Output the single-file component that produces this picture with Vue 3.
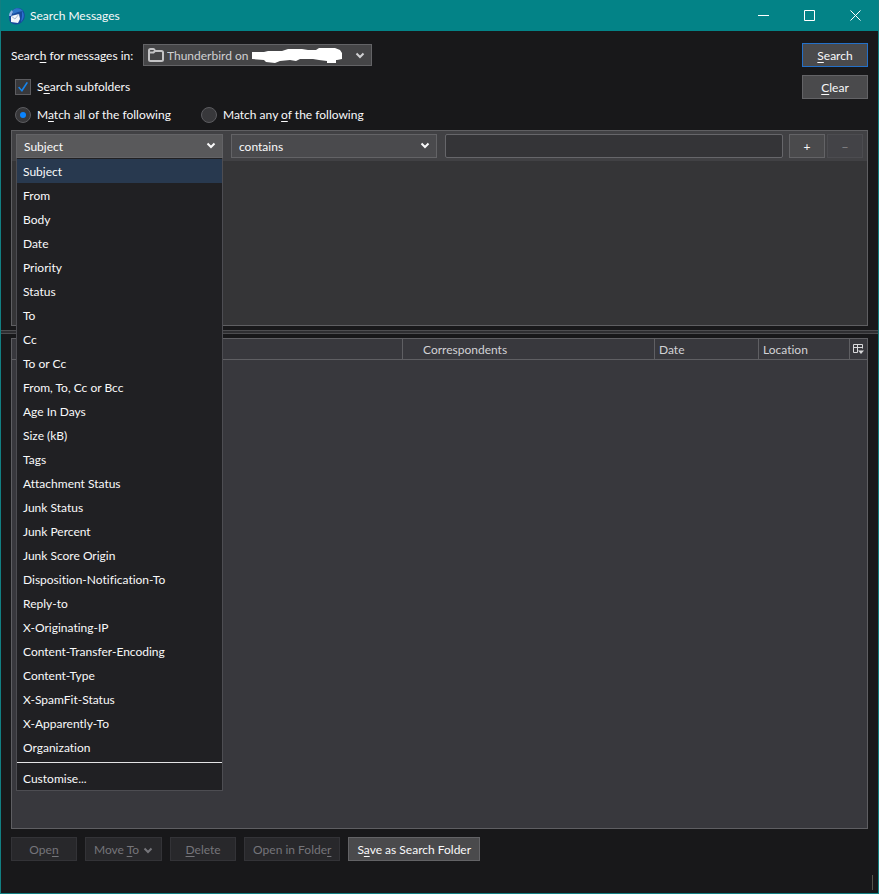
<script setup>
import { ref } from 'vue'

const fields = [
  'Subject', 'From', 'Body', 'Date', 'Priority', 'Status', 'To', 'Cc', 'To or Cc',
  'From, To, Cc or Bcc', 'Age In Days', 'Size (kB)', 'Tags', 'Attachment Status',
  'Junk Status', 'Junk Percent', 'Junk Score Origin', 'Disposition-Notification-To',
  'Reply-to', 'X-Originating-IP', 'Content-Transfer-Encoding', 'Content-Type',
  'X-SpamFit-Status', 'X-Apparently-To', 'Organization'
]
const field = ref('Subject')
const operator = ref('contains')
const term = ref('')
const subfolders = ref(true)
const match = ref('all')
</script>

<template>
  <div class="window">
    <header class="titlebar">
      <svg class="app-icon" viewBox="0 0 18 18" aria-hidden="true">
        <path d="M5 3C8-.2 14 .3 16 5c2 5 0 10-5 12-4 1-8 0-9.500-3L1 9c1-3 2-4 4-6z" fill="#164a9c" />
        <path d="M5 3c3-3 8-2 10 1l-5 1-5 2z" fill="#2f74c8" />
        <path d="M14 4c3 3 2 8-1 11l1-6z" fill="#2b6fd0" />
        <path d="M3 9l8-2 1 5-2 4-7-1z" fill="#f2f5fa" />
        <path d="M3 9l4 3 4-5" fill="none" stroke="#a9b9d2" />
        <path d="M1 9c0-3 1-4 3-6l1 2-2 4z" fill="#8fb3e6" />
      </svg>
      <h1>Search Messages</h1>
      <div class="controls">
        <button type="button" aria-label="Minimise">
          <svg viewBox="0 0 11 11"><path d="M0 5.500h11" /></svg>
        </button>
        <button type="button" aria-label="Maximise">
          <svg viewBox="0 0 11 11"><path d="M.5.5h10v10H.5z" /></svg>
        </button>
        <button type="button" aria-label="Close">
          <svg viewBox="0 0 11 11"><path d="M.5.5l10 10M10.500.5l-10 10" /></svg>
        </button>
      </div>
    </header>

    <section class="scope">
      <div class="options">
        <div class="folder-row">
          <label for="folder">Searc<u>h</u> for messages in:</label>
          <div class="select folder">
            <svg class="folder-icon" viewBox="0 0 16 14" aria-hidden="true">
              <path d="M1 11.500V2.500Q1 1 2.500 1h3Q6.500 1 7 3h6.500Q15 3 15 4.500v7Q15 13 13.500 13h-11Q1 13 1 11.500zM1 4.500h4.500L7 3" />
            </svg>
            <select id="folder"><option>Thunderbird on</option></select>
            <svg class="redaction" viewBox="0 0 92 16" aria-hidden="true">
              <path d="M0 4h12l4-1h14l6-2h14l6 1h8l3-2h16l5 2 2 3v6l-5 1h-1v3h-9v-2l-8-1-6-1H48l-4 2-6-1-10 1-5 2-9-1-2-2-12-1z" />
            </svg>
            <svg class="chevron" viewBox="0 0 10 7" aria-hidden="true"><path d="M1.500 1.500L5 5l3.500-3.500" /></svg>
          </div>
        </div>
        <div class="choice-row">
          <label class="choice"><input v-model="subfolders" type="checkbox"><span>S<u>e</u>arch subfolders</span></label>
        </div>
        <div class="choice-row">
          <label class="choice first"><input v-model="match" type="radio" name="match" value="all"><span>M<u>a</u>tch all of the following</span></label>
          <label class="choice"><input v-model="match" type="radio" name="match" value="any"><span>Match any <u>o</u>f the following</span></label>
        </div>
      </div>
      <div class="actions">
        <button class="btn primary" type="button"><span><u>S</u>earch</span></button>
        <button class="btn" type="button"><span><u>C</u>lear</span></button>
      </div>
    </section>

    <section class="terms">
      <div class="term">
        <div class="select field">
          <select v-model="field" aria-label="Field">
            <option v-for="name in fields" :key="name">{{ name }}</option>
          </select>
          <svg class="chevron" viewBox="0 0 10 7" aria-hidden="true"><path d="M1.500 1.500L5 5l3.500-3.500" /></svg>
          <ul class="menu" role="listbox" aria-label="Fields">
            <li
              v-for="name in fields"
              :key="name"
              role="option"
              :aria-selected="name === field"
              :class="{ selected: name === field }"
              @click="field = name"
            >{{ name }}</li>
            <li class="separator" role="separator"></li>
            <li role="option">Customise...</li>
          </ul>
        </div>
        <div class="select operator">
          <select v-model="operator" aria-label="Operator"><option>contains</option></select>
          <svg class="chevron" viewBox="0 0 10 7" aria-hidden="true"><path d="M1.500 1.500L5 5l3.500-3.500" /></svg>
        </div>
        <input v-model="term" class="value" type="text" aria-label="Value">
        <div class="row-buttons">
          <button class="btn small" type="button">+</button>
          <button class="btn small" type="button" disabled>−</button>
        </div>
      </div>
    </section>

    <div class="splitter" role="separator"></div>

    <section class="results">
      <table>
        <colgroup>
          <col><col class="c-corr"><col class="c-date"><col class="c-loc"><col class="c-pick">
        </colgroup>
        <thead>
          <tr>
            <th></th>
            <th class="corr">Correspondents</th>
            <th>Date</th>
            <th>Location</th>
            <th class="pick">
              <button type="button" aria-label="Select columns to display">
                <svg viewBox="0 0 11 11">
                  <path d="M4.500 8.500h-4v-8h9v4M.5 3.500h9M4.500.5v8" fill="none" stroke="#d8d8da" />
                  <path d="M5 6.500h6l-3 3.500z" fill="#d8d8da" />
                </svg>
              </button>
            </th>
          </tr>
        </thead>
      </table>
    </section>

    <footer class="commands">
      <button class="btn" type="button" disabled><span>Ope<u>n</u></span></button>
      <button class="btn" type="button" disabled>
        <span>Move <u>T</u>o</span>
        <svg class="arrow" viewBox="0 0 10 7" aria-hidden="true"><path d="M1.500 1.500L5 5l3.500-3.500" /></svg>
      </button>
      <button class="btn" type="button" disabled><span><u>D</u>elete</span></button>
      <button class="btn" type="button" disabled><span>Open in Folde<u>r</u></span></button>
      <button class="btn" type="button"><span>S<u>a</u>ve as Search Folder</span></button>
    </footer>
    <div class="statusbar"><span class="grip"></span></div>
  </div>
</template>

<style>
body {
  margin: 0;
  background: #fff;
}
</style>

<style scoped>
* {
  box-sizing: border-box;
}

.window {
  display: flex;
  flex-direction: column;
  min-height: calc(100vh - 1px);
  border: 1px solid #127f82;
  border-top: 0;
  background: #18181a;
  color: #f9f9fa;
  font-family: Lato, "Open Sans", sans-serif;
  font-size: 12px;
  font-variant-ligatures: none;
  line-height: 16px;
}

button,
input,
select {
  margin: 0;
  font: inherit;
  font-variant-ligatures: none;
  color: inherit;
}

u {
  text-underline-offset: 2px;
}

.titlebar {
  display: flex;
  align-items: center;
  height: 31px;
  padding-left: 7px;
  background: #038387;
}

.app-icon {
  width: 18px;
  height: 18px;
}

h1 {
  flex: 1;
  margin: 0 0 0 4px;
  font-size: 12px;
  font-weight: 400;
}

.controls {
  display: flex;
}

.controls button {
  display: grid;
  place-items: center;
  width: 46px;
  height: 30px;
  padding: 0;
  border: 0;
  background: none;
}

.controls svg {
  width: 11px;
  height: 11px;
  fill: none;
  stroke: #fff;
}

.scope {
  display: flex;
  justify-content: space-between;
  padding: 12px 10px 7px;
}

.options {
  display: flex;
  flex-direction: column;
  gap: 12px;
}

.folder-row {
  display: flex;
  align-items: center;
  height: 24px;
}

.folder-row label {
  min-width: 132px;
  padding-top: 2px;
  white-space: nowrap;
}

.choice-row {
  display: flex;
  height: 16px;
  padding-left: 4px;
}

.choice {
  display: flex;
  align-items: center;
  gap: 6px;
}

.choice.first {
  min-width: 186px;
}

.choice input {
  display: grid;
  place-items: center;
  width: 16px;
  height: 16px;
  border: 1px solid #5c5c60;
  background: #38383b;
  appearance: none;
}

.choice input[type="radio"] {
  border-radius: 50%;
}

.choice input[type="radio"]:checked::before {
  width: 6px;
  height: 6px;
  border-radius: 50%;
  background: #0a84ff;
  content: "";
}

.choice input[type="checkbox"]:checked::before {
  width: 10px;
  height: 10px;
  background: #1684ec;
  clip-path: polygon(0 55%, 14% 47%, 36% 74%, 86% 0, 100% 8%, 40% 100%);
  content: "";
}

.actions {
  display: flex;
  flex-direction: column;
  gap: 8px;
}

.btn {
  display: flex;
  align-items: center;
  justify-content: center;
  gap: 4px;
  min-width: 66px;
  height: 24px;
  padding: 2px 8px 0;
  border: 1px solid #636366;
  background: #4a4a4c;
  white-space: nowrap;
}

.btn.primary {
  border-color: #2470c8;
}

.btn:disabled {
  border-color: #333337;
  background: #28282b;
  color: #75757a;
}

.btn.small {
  min-width: 36px;
  padding: 2px 0 0;
}

.btn.small:disabled {
  border-color: #4c4c50;
  background: #434347;
  color: #858589;
}

.select {
  position: relative;
  height: 24px;
}

.select select {
  width: 100%;
  height: 100%;
  padding: 2px 20px 0 7px;
  border: 1px solid #636366;
  border-radius: 0;
  background: #4a4a4d;
  appearance: none;
}

.chevron {
  position: absolute;
  top: 8px;
  right: 7px;
  width: 10px;
  height: 7px;
  pointer-events: none;
}

.chevron path,
.arrow path {
  fill: none;
  stroke: currentColor;
  stroke-width: 2;
}

.arrow {
  width: 10px;
  height: 7px;
}

.folder {
  width: 229px;
  height: 22px;
  color: #d0d0d2;
}

.folder select {
  padding-left: 23px;
  background: #454547;
}

.folder-icon {
  position: absolute;
  top: 4px;
  left: 5px;
  width: 16px;
  height: 14px;
  fill: none;
  stroke: #c4c4c6;
  stroke-width: 2;
}

.redaction {
  position: absolute;
  top: 4px;
  left: 109px;
  width: 92px;
  height: 16px;
  fill: #fff;
}

.terms {
  height: 196px;
  margin: 0 10px;
  border: 1px solid #5f5f62;
  background: #353537;
}

.term {
  display: flex;
  gap: 8px;
  height: 30px;
  padding: 3px 4px;
  background: #414144;
}

.field,
.operator {
  flex: 0 1 207px;
}

.operator {
  flex-basis: 206px;
}

.field select {
  background: #59595b;
}

.value {
  flex: 1;
  min-width: 0;
  height: 24px;
  padding: 0 6px;
  border: 1px solid #66666a;
  border-radius: 2px;
  background: #343437;
}

.row-buttons {
  display: flex;
  gap: 2px;
  margin-left: -2px;
}

.menu {
  position: absolute;
  z-index: 1;
  top: 24px;
  left: 0;
  width: 100%;
  margin: 0;
  padding: 1px 0 0;
  border: 1px solid #4d4d52;
  border-top: 0;
  background: #202023;
  list-style: none;
}

.menu li {
  height: 24px;
  padding: 0 6px;
  line-height: 26px;
}

.menu li.selected {
  background: #28394f;
}

.menu li.separator {
  height: 1px;
  margin: 3px 0;
  padding: 0;
  background: #e4e4e6;
}

.splitter {
  height: 4px;
  margin: 4px 0;
  border: solid #4d4d50;
  border-width: 1px 0;
  background: #2e2e31;
}

.results {
  flex: 1;
  margin: 0 10px;
  border: 1px solid #5f5f63;
  background: #38383d;
}

table {
  width: 100%;
  border-spacing: 0;
  table-layout: fixed;
}

.c-corr {
  width: 252px;
}

.c-date {
  width: 104px;
}

.c-loc {
  width: 91px;
}

.c-pick {
  width: 17px;
}

th {
  height: 21px;
  padding: 2px 4px 0;
  border-right: 1px solid #5f5f63;
  border-bottom: 1px solid #5f5f63;
  color: #d2d2d5;
  font-weight: 400;
  text-align: left;
}

.corr {
  padding-left: 20px;
}

.pick {
  padding: 0;
  border-right: 0;
}

.pick button {
  display: grid;
  place-items: center;
  width: 100%;
  height: 20px;
  padding: 0;
  border: 0;
  background: none;
}

.pick svg {
  width: 11px;
  height: 11px;
}

.commands {
  display: flex;
  gap: 8px;
  padding: 8px 10px 0;
}

.statusbar {
  display: flex;
  align-items: flex-end;
  justify-content: flex-end;
  height: 32px;
  padding: 0 5px 3px;
}

.grip {
  width: 1px;
  height: 15px;
  background: #56564e;
}
</style>
